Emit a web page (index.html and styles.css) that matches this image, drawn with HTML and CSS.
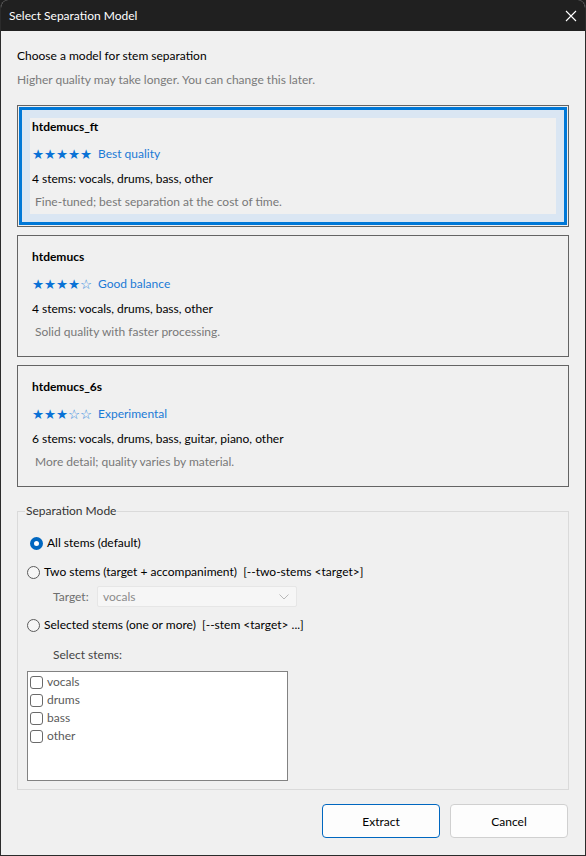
FILE: index.html
```html
<!DOCTYPE html>
<html>
<head>
<meta charset="utf-8">
<link rel="stylesheet" href="styles.css">
</head>
<body>
<div class="window">
  <div class="titlebar">
    <span class="title">Select Separation Model</span>
    <svg class="close" width="12" height="12" viewBox="0 0 12 12"><path d="M1 1 L11 11 M11 1 L1 11" stroke="#ffffff" stroke-width="1.1" fill="none"/></svg>
  </div>
  <div class="content">
    <div class="heading">Choose a model for stem separation</div>
    <div class="subtitle">Higher quality may take longer. You can change this later.</div>

    <div class="cards">
      <div class="card selected">
        <div class="inner">
          <div class="body">
            <div class="name">htdemucs_ft</div>
            <div class="rating"><span class="stars">★★★★★</span><span class="label">Best quality</span></div>
            <div class="stems">4 stems: vocals, drums, bass, other</div>
            <div class="desc">Fine-tuned; best separation at the cost of time.</div>
          </div>
        </div>
      </div>
      <div class="card">
        <div class="inner">
          <div class="body">
            <div class="name">htdemucs</div>
            <div class="rating"><span class="stars">★★★★<span class="empty">☆</span></span><span class="label">Good balance</span></div>
            <div class="stems">4 stems: vocals, drums, bass, other</div>
            <div class="desc">Solid quality with faster processing.</div>
          </div>
        </div>
      </div>
      <div class="card">
        <div class="inner">
          <div class="body">
            <div class="name">htdemucs_6s</div>
            <div class="rating"><span class="stars">★★★<span class="empty">☆☆</span></span><span class="label">Experimental</span></div>
            <div class="stems">6 stems: vocals, drums, bass, guitar, piano, other</div>
            <div class="desc">More detail; quality varies by material.</div>
          </div>
        </div>
      </div>
    </div>

    <fieldset class="group">
      <legend>Separation Mode</legend>
      <div class="radio-row first">
        <span class="radio checked"></span>
        <span>All stems (default)</span>
      </div>
      <div class="radio-row second">
        <span class="radio"></span>
        <span>Two stems (target + accompaniment)&nbsp;&nbsp;[--two-stems &lt;target&gt;]</span>
      </div>
      <div class="target-row">
        <span class="target-label">Target:</span>
        <div class="combo">
          <span>vocals</span>
          <svg width="10" height="6" viewBox="0 0 10 6"><path d="M0.5 0.5 L5 5 L9.5 0.5" stroke="#b8b8b8" stroke-width="1" fill="none"/></svg>
        </div>
      </div>
      <div class="radio-row third">
        <span class="radio"></span>
        <span>Selected stems (one or more)&nbsp;&nbsp;[--stem &lt;target&gt; ...]</span>
      </div>
      <div class="select-label">Select stems:</div>
      <div class="listbox">
        <div class="check-row"><span class="check"></span><span>vocals</span></div>
        <div class="check-row"><span class="check"></span><span>drums</span></div>
        <div class="check-row"><span class="check"></span><span>bass</span></div>
        <div class="check-row"><span class="check"></span><span>other</span></div>
      </div>
    </fieldset>

    <div class="buttons">
      <button class="btn primary">Extract</button>
      <button class="btn">Cancel</button>
    </div>
  </div>
</div>
</body>
</html>
```

FILE: styles.css
```css
html, body {
  margin: 0;
  padding: 0;
  background: #1f1f1f;
}
body {
  font-family: "Lato", "Noto Sans", sans-serif;
  font-size: 12px;
  color: #000;
}
.window {
  width: 586px;
  height: 856px;
  box-sizing: border-box;
  border: 1px solid #2b2b2b;
  border-top: 0;
  border-radius: 8px 8px 0 0;
  background: #f0f0f0;
  overflow: hidden;
  display: flex;
  flex-direction: column;
}
.titlebar {
  height: 31px;
  flex: none;
  background: #202020;
  color: #ffffff;
  display: flex;
  align-items: center;
  padding: 0 8px 0 8px;
  justify-content: space-between;
}
.title {
  font-size: 12px;
  line-height: 16px;
}
.close {
  display: block;
}
.content {
  padding: 17px 16px 0 16px;
  display: flex;
  flex-direction: column;
}
.heading {
  line-height: 16px;
  height: 16px;
}
.subtitle {
  line-height: 16px;
  height: 16px;
  margin-top: 8px;
  color: #7a7a7a;
}
.cards {
  margin-top: 17px;
  display: flex;
  flex-direction: column;
  gap: 8px;
}
.card {
  border: 1px solid #646464;
  padding: 1px;
}
.inner {
  border: 3px solid transparent;
  padding: 8px;
}
.card.selected .inner {
  border-color: #0078d7;
  background: #dae6f3;
}
.body {
  background: #f0f0f0;
  height: 96px;
  box-sizing: border-box;
  padding: 1px 2px 0 2px;
}
.name {
  line-height: 16px;
  height: 16px;
  font-weight: 700;
}
.rating {
  margin-top: 11px;
  line-height: 16px;
  height: 16px;
  display: flex;
  align-items: center;
}
.stars {
  font-family: "DejaVu Sans", sans-serif;
  font-size: 13.5px;
  color: #0a72d6;
  letter-spacing: -0.1px;
  width: 60px;
  margin-right: 6px;
  white-space: nowrap;
}
.stars .empty {
  color: #2f88de;
}
.label {
  color: #1a7ad6;
}
.stems {
  margin-top: 9px;
  line-height: 16px;
  height: 16px;
}
.desc {
  margin-top: 7px;
  line-height: 16px;
  height: 16px;
  padding-left: 3px;
  color: #787878;
}
.group {
  margin: 16px 0 0 0;
  border: 1px solid #dadada;
  padding: 14px 0 8px 9px;
  min-width: 0;
}
.group legend {
  margin-left: -2px;
  padding: 0 1px;
  line-height: 16px;
  color: #333333;
}
.radio-row {
  display: flex;
  align-items: center;
  height: 20px;
  line-height: 16px;
  gap: 4px;
  white-space: nowrap;
}
.radio-row.first {
  padding-left: 3px;
}
.radio-row.second {
  margin-top: 9px;
}
.radio-row.third {
  margin-top: 8px;
}
.radio {
  width: 13px;
  height: 13px;
  box-sizing: border-box;
  border-radius: 50%;
  border: 1px solid #5b5b5b;
  background: #f6f6f6;
  flex: none;
}
.radio.checked {
  border: 4px solid #0067c0;
  background: #ffffff;
}
.target-row {
  display: flex;
  align-items: center;
  margin-top: 4px;
  padding-left: 26px;
  height: 21px;
}
.target-label {
  color: #6e6e6e;
  width: 44px;
  line-height: 16px;
}
.combo {
  width: 200px;
  height: 21px;
  box-sizing: border-box;
  border: 1px solid #e6e6e6;
  background: #f6f6f6;
  display: flex;
  align-items: center;
  justify-content: space-between;
  padding: 0 7px 0 5px;
  color: #8c8c8c;
  border-radius: 2px;
}
.select-label {
  margin-top: 12px;
  line-height: 16px;
  height: 16px;
  padding-left: 26px;
  color: #444444;
}
.listbox {
  margin-top: 8px;
  width: 261px;
  height: 110px;
  box-sizing: border-box;
  border: 1px solid #828282;
  background: #ffffff;
  padding: 1px 2px;
}
.check-row {
  display: flex;
  align-items: center;
  height: 18px;
  gap: 4px;
  color: #5a5a5a;
  line-height: 16px;
}
.check {
  width: 13px;
  height: 13px;
  box-sizing: border-box;
  border: 1px solid #6a6a6a;
  border-radius: 3px;
  background: #ffffff;
  flex: none;
}
.buttons {
  margin-top: 14px;
  display: flex;
  justify-content: flex-end;
  gap: 10px;
  padding-right: 1px;
}
.btn {
  width: 118px;
  height: 34px;
  box-sizing: border-box;
  border: 1px solid #d0d0d0;
  border-radius: 4px;
  background: #fdfdfd;
  font-family: "Lato", "Noto Sans", sans-serif;
  font-size: 12px;
  color: #000;
  padding: 0;
}
.btn.primary {
  border-color: #0067c0;
}
```
